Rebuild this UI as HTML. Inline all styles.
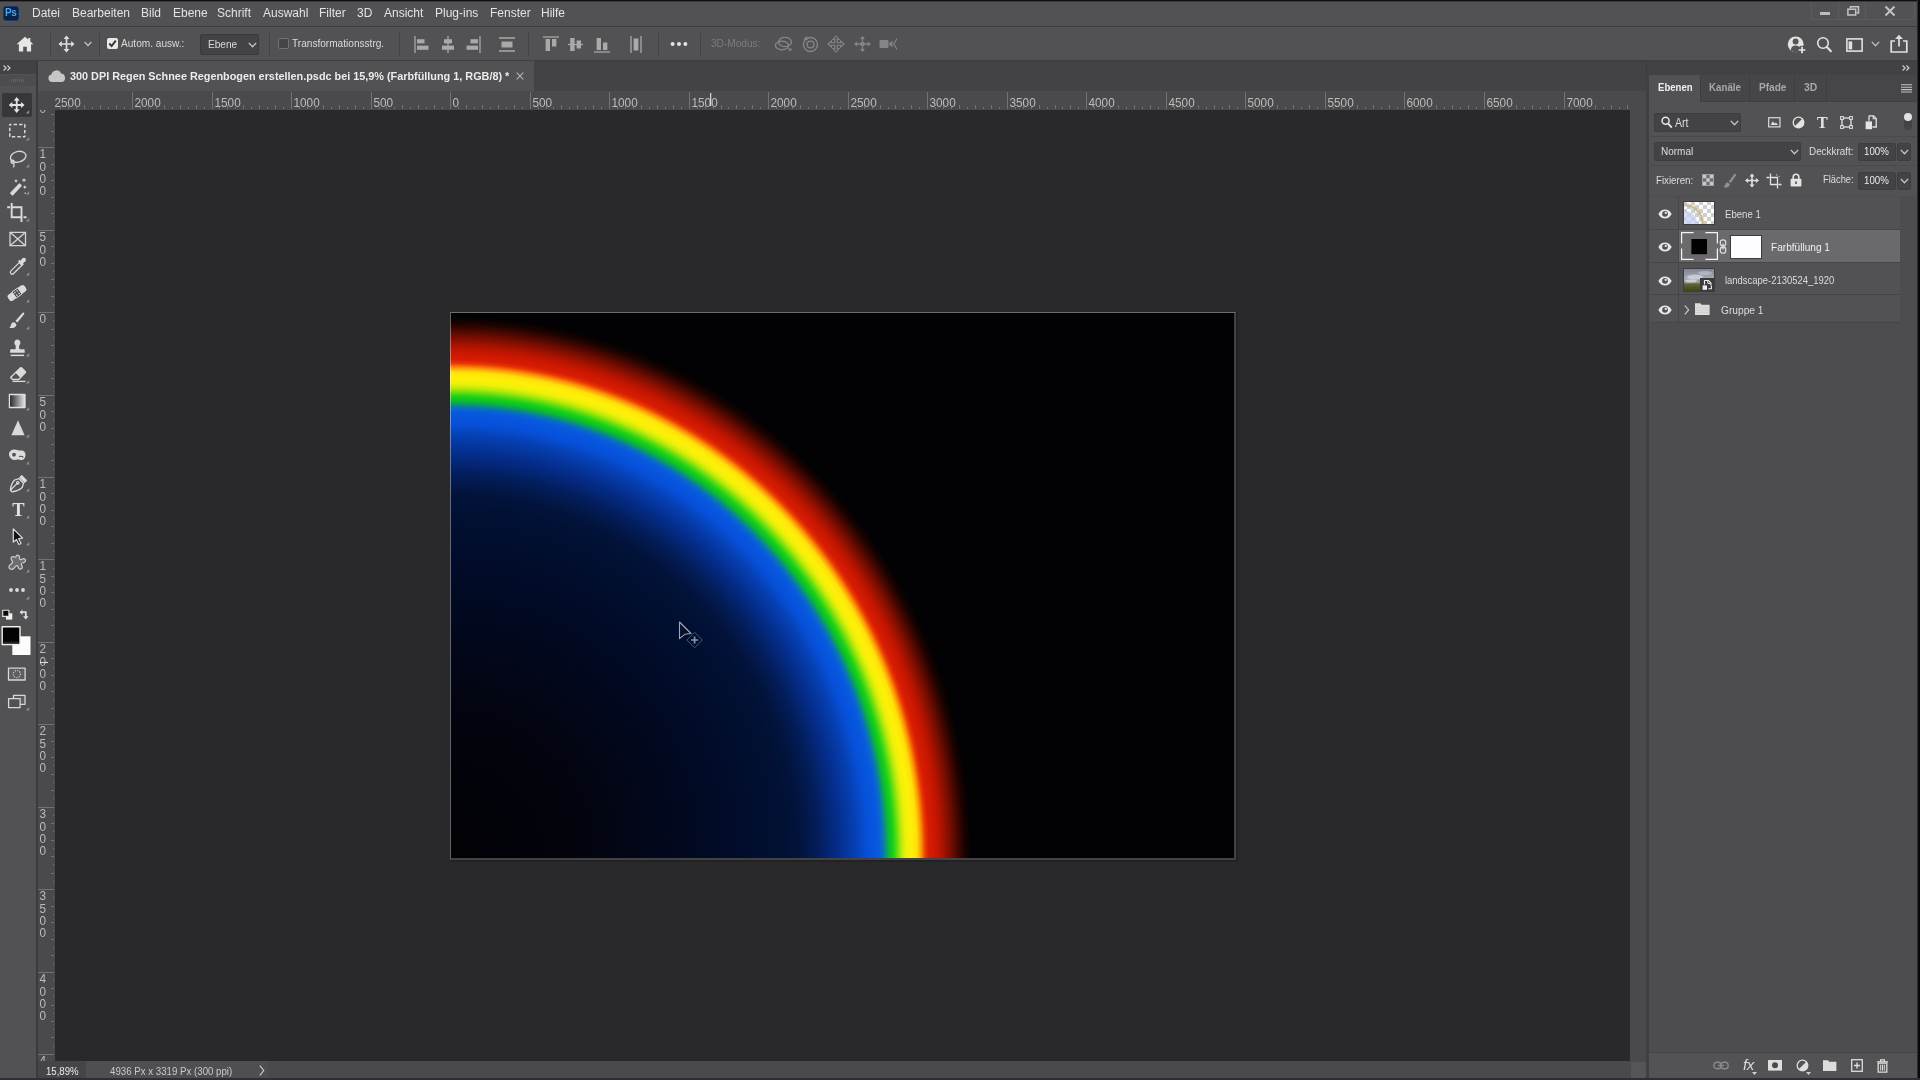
<!DOCTYPE html>
<html lang="de">
<head>
<meta charset="utf-8">
<title>300 DPI Regen Schnee Regenbogen erstellen.psdc</title>
<style>
*{box-sizing:border-box;margin:0;padding:0}
html,body{width:1920px;height:1080px;overflow:hidden;background:#4f4e50}
body{position:relative;font-family:"Liberation Sans",sans-serif;font-size:11.5px;color:#dedede;-webkit-font-smoothing:antialiased}
.abs{position:absolute}
svg{position:absolute;overflow:visible}
.t{position:absolute;white-space:nowrap;line-height:1;will-change:transform,opacity;opacity:.999}
svg.tx{opacity:.999;will-change:transform,opacity}
/* ---------- top chrome ---------- */
#topline{left:0;top:0;width:1920px;height:2px;background:#0e0e10;border-bottom:1px solid #3a393c}
#menubar{left:0;top:2px;width:1920px;height:24px;background:#525153}
#menuline{left:0;top:26px;width:1920px;height:1px;background:#3c3b3d}
#optbar{left:0;top:27px;width:1920px;height:34px;background:#525153}
#optline{left:0;top:60px;width:1920px;height:2px;background:#3f3e40}
#tabbar{left:0;top:62px;width:1920px;height:30px;background:#434244}
#doctab{left:38px;top:61px;width:496px;height:30px;background:#525153}
.menu{top:7px;font-size:12px;color:#e4e4e4;transform:scaleY(1.07);transform-origin:0 50%}
.opt{top:39px;font-size:10.1px;color:#dcdcdc;transform:scaleY(1.12);transform-origin:0 50%}
.sep{position:absolute;top:33px;width:1px;height:23px;background:#434244}
.ptab{top:82.5px;font-size:10.4px;font-weight:bold;color:#a9a8aa;transform:scaleY(1.1);transform-origin:0 50%}
.ptx{font-size:10px;color:#dedede;transform:scaleY(1.12);transform-origin:0 50%;margin-top:.7px}
.fld{background:#434244;border:1px solid #3d3c3e;border-radius:2px}
/* ---------- tools panel ---------- */
#toolhead{left:0;top:61px;width:36px;height:13px;background:#424143}
#tools{left:0;top:74px;width:36px;height:1006px;background:#525153}
#toolgap{left:36px;top:61px;width:2px;height:1019px;background:#3b3a3c}
#seltool{left:2px;top:93px;width:30px;height:24px;background:#373638;border-radius:2px}
/* ---------- document area ---------- */
#hruler{left:38px;top:91px;width:1592px;height:19px;background:#4a494b}
#vruler{left:38px;top:110px;width:17px;height:951px;background:#4a494b}
#work{left:55px;top:110px;width:1575px;height:951px;background:#29282a}
#statusbar{left:38px;top:1061px;width:1592px;height:19px;background:#4a494b}
#canvas{left:450px;top:312px;width:784px;height:546px;background:#020103;overflow:hidden}
#cvborder{left:450px;top:312px;width:786px;height:548px;border-right:2px solid #424144;border-bottom:2px solid #424144;border-top:1px solid rgba(255,255,255,.42);border-left:1px solid rgba(255,255,255,.38)}
#cvshadow{left:450px;top:312px;width:788px;height:550px;border-right:2px solid #222123;border-bottom:2px solid #222123}
#rainbow{left:0;top:0;width:784px;height:546px;
background:radial-gradient(500px 518.3px at 1.0px 543.1px,#020207 0.00%,#02030c 24.00%,#02071a 40.00%,#010b27 54.00%,#011033 66.00%,#02143c 69.80%,#031e5c 73.60%,#042c88 77.20%,#0640b4 81.00%,#0650d8 83.20%,#0858e0 85.40%,#0870c0 86.30%,#0a9870 87.00%,#0cc028 87.70%,#18d018 88.40%,#60dc10 89.20%,#b8ea08 90.10%,#f0f008 91.00%,#fff008 92.10%,#ffe008 93.20%,#ff9808 94.00%,#e83800 94.90%,#d81c04 95.60%,#cc1800 96.80%,#b41400 98.00%,#7c0e00 99.80%,#440700 101.40%,#1c0300 102.60%,#020103 104.00%)}
/* ---------- right dock ---------- */
#dockgap{left:1630px;top:91px;width:18px;height:989px;background:#4a494b}
#dockhead{left:1648px;top:61px;width:269px;height:14px;background:#424143}
#docktabs{left:1648px;top:75px;width:269px;height:27px;background:#464547}
#dock{left:1648px;top:102px;width:269px;height:978px;background:#525153}
#dockright{left:1917px;top:0;width:3px;height:1080px;background:#09090b;border-left:1px solid #2c2b2d}
#dockleft{left:1646px;top:75px;width:3px;height:1005px;background:#403f42}
#dockleft2{left:1646px;top:62px;width:1px;height:13px;background:#3a393b}
#gapcorner{left:1631px;top:1062px;width:15px;height:16px;background:#555457}
#dockbot{left:1649px;top:1053px;width:268px;height:25px;background:#535254}
</style>
</head>
<body>
<!-- top chrome -->
<div class="abs" id="menubar"></div>
<div class="abs" id="topline"></div>
<div class="abs" id="menuline"></div>
<div class="abs" id="optbar"></div>
<div class="abs" id="optline"></div>
<div class="abs" id="tabbar"></div>
<div class="abs" id="doctab"></div>

<!-- document area -->
<div class="abs" id="work"></div>
<div class="abs" id="hruler"></div>
<div class="abs" id="vruler"></div>
<div class="abs" id="statusbar"></div>
<div class="abs" id="cvshadow"></div>
<div class="abs" id="canvas"><div class="abs" id="rainbow"></div></div>
<div class="abs" id="cvborder"></div>

<!-- tools panel -->
<div class="abs" id="tools"></div>
<div class="abs" id="toolhead"></div>
<div class="abs" id="toolgap"></div>
<div class="abs" id="seltool"></div>
<div class="abs" style="left:0;top:75px;width:36px;height:11px;background:#4d4c4e"></div>
<div class="abs" style="left:11px;top:79px;width:14px;height:3px;background:repeating-linear-gradient(90deg,#626163 0 1px,transparent 1px 2px)"></div>

<!-- right dock -->
<div class="abs" id="dockgap"></div>
<div class="abs" id="dockhead"></div>
<div class="abs" id="docktabs"></div>
<div class="abs" id="dock"></div>
<div class="abs" id="dockleft"></div>
<div class="abs" id="dockleft2"></div>
<div class="abs" id="gapcorner"></div>
<div class="abs" id="dockright"></div>

<!-- menu bar -->
<div class="abs" style="left:3px;top:5.500px;width:16px;height:15.500px;background:#0c2340;border-radius:3px;border:1px solid #143a66"></div>
<div class="t" style="left:5.300px;top:8.300px;font-size:10px;font-weight:bold;color:#4fa3f2;letter-spacing:-0.3px">Ps</div>
<div class="t menu" style="left:32px">Datei</div>
<div class="t menu" style="left:72px">Bearbeiten</div>
<div class="t menu" style="left:141px">Bild</div>
<div class="t menu" style="left:173px">Ebene</div>
<div class="t menu" style="left:217px">Schrift</div>
<div class="t menu" style="left:263px">Auswahl</div>
<div class="t menu" style="left:319px">Filter</div>
<div class="t menu" style="left:357px">3D</div>
<div class="t menu" style="left:384px">Ansicht</div>
<div class="t menu" style="left:435px">Plug-ins</div>
<div class="t menu" style="left:490px">Fenster</div>
<div class="t menu" style="left:541px">Hilfe</div>
<!-- window controls -->
<div class="abs" style="left:1811px;top:2px;width:28px;height:18px;border:1px solid #5b5a5c;border-top:0"></div><div class="abs" style="left:1838px;top:2px;width:28px;height:18px;border:1px solid #5b5a5c;border-top:0"></div><div class="abs" style="left:1865px;top:2px;width:50px;height:18px;border:1px solid #5b5a5c;border-top:0"></div>
<div class="abs" style="left:1820px;top:12px;width:10px;height:3px;background:#bcbcbc"></div>
<svg style="left:1846px;top:5px" width="14" height="12" viewBox="1846 5 14 12"><path d="M1850.500 8.500V6.700h8v6.400h-2" fill="none" stroke="#c4c4c4" stroke-width="1.500"/><rect x="1847.900" y="9.200" width="7.800" height="5.800" fill="none" stroke="#c4c4c4" stroke-width="1.500"/></svg>
<svg style="left:1884px;top:5px" width="12" height="12" viewBox="0 0 12 12"><path d="M1.5 1.5l9 9M10.5 1.5l-9 9" stroke="#c4c4c4" stroke-width="1.9" fill="none"/></svg>

<!-- options bar -->
<svg style="left:16px;top:36px" width="18" height="16" viewBox="0 0 18 16"><path d="M9 .8L.6 8.2h2.3V15.4h4.3v-4.6h3.6v4.6h4.3V8.2h2.3L14.3 5.4V1.9h-2v1.7z" fill="#e6e6e6"/></svg>
<div class="sep" style="left:50px"></div>
<svg style="left:58px;top:35px" width="17" height="18" viewBox="0 0 17 18"><path d="M8.5 .6l3 3.4h-2.2v4.2h3.9V6l3.3 3-3.3 3V9.8H9.3V14h2.2l-3 3.4-3-3.4h2.2V9.8H3.8V12L.5 9l3.3-3v2.2h3.9V4H5.5z" fill="#dedede"/></svg>
<svg style="left:84px;top:41px" width="8" height="6" viewBox="0 0 8 6"><path d="M.7 1l3.3 3.6L7.3 1" fill="none" stroke="#c8c8c8" stroke-width="1.3"/></svg>
<div class="sep" style="left:99px"></div>
<div class="abs" style="left:107px;top:38px;width:11px;height:11px;background:#e9e9e9;border-radius:2px"></div>
<svg style="left:107px;top:38px" width="11" height="11" viewBox="0 0 11 11"><path d="M2.3 5.5l2.3 2.6 4.2-5.4" fill="none" stroke="#333" stroke-width="1.9"/></svg>
<div class="t opt" style="left:121px">Autom. ausw.:</div>
<div class="abs" style="left:200px;top:34px;width:59px;height:21px;background:#434244;border:1px solid #3a393b;border-radius:2px"></div>
<div class="t opt" style="left:208px;top:40px">Ebene</div>
<svg style="left:248px;top:42px" width="9" height="6" viewBox="0 0 9 6"><path d="M.8 .9L4.5 4.8 8.2 .9" fill="none" stroke="#c8c8c8" stroke-width="1.3"/></svg>
<div class="sep" style="left:269px"></div>
<div class="abs" style="left:278px;top:38px;width:11px;height:11px;background:#454446;border:1px solid #727173;border-radius:2px"></div>
<div class="t opt" style="left:292px">Transformationsstrg.</div>
<div class="sep" style="left:399px"></div>
<!-- align icons -->
<svg style="left:414px;top:36px" width="16" height="17" viewBox="0 0 16 17"><path d="M1 0v17" stroke="#a9a9a9" stroke-width="1.3"/><rect x="3" y="3.2" width="7.5" height="4.2" fill="#a9a9a9"/><rect x="3" y="9.6" width="11.5" height="4.2" fill="#a9a9a9"/></svg>
<svg style="left:441px;top:36px" width="14" height="17" viewBox="0 0 14 17"><path d="M7 0v17" stroke="#a9a9a9" stroke-width="1.3"/><rect x="3" y="3.2" width="8" height="4.2" fill="#a9a9a9"/><rect x="1" y="9.6" width="12" height="4.2" fill="#a9a9a9"/></svg>
<svg style="left:465px;top:36px" width="16" height="17" viewBox="0 0 16 17"><path d="M15 0v17" stroke="#a9a9a9" stroke-width="1.3"/><rect x="5.5" y="3.2" width="7.5" height="4.2" fill="#a9a9a9"/><rect x="1.5" y="9.6" width="11.5" height="4.2" fill="#a9a9a9"/></svg>
<svg style="left:499px;top:37px" width="16" height="15" viewBox="0 0 16 15"><path d="M0 1h16M0 14h16" stroke="#a9a9a9" stroke-width="1.3"/><rect x="2.5" y="4.5" width="11" height="6" fill="#a9a9a9"/></svg>
<div class="sep" style="left:528px"></div>
<svg style="left:543px;top:36px" width="16" height="16" viewBox="0 0 16 16"><path d="M0 1h16" stroke="#a9a9a9" stroke-width="1.3"/><rect x="2.6" y="3" width="4.4" height="12" fill="#a9a9a9"/><rect x="9" y="3" width="4.4" height="7.5" fill="#a9a9a9"/></svg>
<svg style="left:568px;top:36px" width="15" height="17" viewBox="0 0 15 17"><path d="M0 8.5h15" stroke="#a9a9a9" stroke-width="1.3"/><rect x="2.2" y="2" width="4.4" height="13" fill="#a9a9a9"/><rect x="8.6" y="4.5" width="4.4" height="8" fill="#a9a9a9"/></svg>
<svg style="left:594px;top:36px" width="16" height="17" viewBox="0 0 16 17"><path d="M0 16h16" stroke="#a9a9a9" stroke-width="1.3"/><rect x="2.6" y="2" width="4.4" height="12" fill="#a9a9a9"/><rect x="9" y="6.5" width="4.4" height="7.5" fill="#a9a9a9"/></svg>
<svg style="left:630px;top:36px" width="12" height="17" viewBox="0 0 12 17"><path d="M1 0v17M11 0v17" stroke="#a9a9a9" stroke-width="1.3"/><rect x="3.6" y="2.5" width="4.8" height="12" fill="#a9a9a9"/></svg>
<div class="sep" style="left:658px"></div>
<svg style="left:670px;top:41px" width="18" height="6" viewBox="0 0 18 6"><circle cx="2.6" cy="3" r="2" fill="#e2e2e2"/><circle cx="9" cy="3" r="2" fill="#e2e2e2"/><circle cx="15.4" cy="3" r="2" fill="#e2e2e2"/></svg>
<div class="sep" style="left:700px"></div>
<div class="t opt" style="left:711px;color:#7e7d7f">3D-Modus:</div>
<!-- 3D icons (dimmed) -->
<svg style="left:774px;top:36px" width="20" height="16" viewBox="0 0 20 16"><ellipse cx="11" cy="6" rx="6.5" ry="4.6" fill="none" stroke="#858486" stroke-width="1.4"/><ellipse cx="8" cy="9.5" rx="6.6" ry="4.2" fill="none" stroke="#858486" stroke-width="1.4"/><path d="M14 12l4.5 1-2.8 2.6z" fill="#858486"/></svg>
<svg style="left:802px;top:35px" width="17" height="18" viewBox="0 0 17 18"><circle cx="8.5" cy="9.5" r="7" fill="none" stroke="#858486" stroke-width="1.4"/><circle cx="8.5" cy="9.5" r="3.4" fill="none" stroke="#858486" stroke-width="1.4"/><path d="M1 4.5l4-3.4.6 4.2z" fill="#858486"/></svg>
<svg style="left:827px;top:35px" width="18" height="18" viewBox="-9 -9 18 18"><path d="M0-8L3-4.600H1.200V-1.200H4.600V-3L8 0 4.600 3V1.200H1.200V4.600H3L0 8-3 4.600H-1.200V1.200H-4.600V3L-8 0-4.600-3V-1.200H-1.200V-4.600H-3z" fill="none" stroke="#858486" stroke-width="1.100"/></svg>
<svg style="left:853px;top:35px" width="19" height="18" viewBox="0 0 19 18"><circle cx="9.5" cy="9" r="2.4" fill="#858486"/><path d="M9.500 .8l2.400 3.200H7.100zM9.500 17.200l2.400-3.200H7.100zM1 9l3.200-2.400v4.800zM18 9l-3.200-2.400v4.800z" fill="#858486"/><path d="M9.500 4v2.500M9.500 11.500V14M4 9h3M12 9h3" stroke="#858486" stroke-width="1.3"/></svg>
<svg style="left:879px;top:37px" width="19" height="14" viewBox="0 0 19 14"><rect x=".5" y="3" width="9" height="8" rx="1" fill="#858486"/><path d="M9.500 7l4-3.500v7z" fill="#858486"/><path d="M18 1.500L14.800 7l3.200 5.500" fill="none" stroke="#858486" stroke-width="1.2"/></svg>
<!-- right side -->
<svg style="left:1786px;top:34px" width="22" height="22" viewBox="1786 34 22 22"><circle cx="1795.700" cy="44.300" r="7.900" fill="#e4e4e4"/><circle cx="1795.600" cy="41.600" r="3" fill="#555456"/><path d="M1790.600 50.200c.6-3.200 2.400-4.600 5-4.600s4.400 1.400 5 4.600c-1.400 1.300-3.100 2-5 2s-3.600-.7-5-2z" fill="#555456"/><circle cx="1802" cy="50" r="4.300" fill="#525153"/><path d="M1802 46.700v6.600M1798.700 50h6.600" stroke="#e8e8e8" stroke-width="1.700"/></svg>
<svg style="left:1815px;top:35px" width="19" height="19" viewBox="1815 35 19 19"><circle cx="1823" cy="43" r="5.300" fill="none" stroke="#e2e2e2" stroke-width="1.600"/><path d="M1826.900 47l4 4.300" stroke="#e2e2e2" stroke-width="2" stroke-linecap="round"/></svg>
<svg style="left:1846px;top:38px" width="17" height="14" viewBox="0 0 17 14"><rect x=".9" y=".9" width="15.200" height="12.200" fill="none" stroke="#e0e0e0" stroke-width="1.600"/><rect x="2.600" y="3.400" width="3.600" height="8" fill="#e0e0e0"/></svg>
<svg style="left:1871px;top:41px" width="9" height="6" viewBox="0 0 9 6"><path d="M.8 .9L4.500 4.800 8.200 .9" fill="none" stroke="#bdbdbd" stroke-width="1.300"/></svg>
<svg style="left:1890px;top:34px" width="18" height="19" viewBox="0 0 18 19"><path d="M5 7H1.200v11h15.600V7H13" fill="none" stroke="#e0e0e0" stroke-width="1.700"/><path d="M9 12.500V2" stroke="#e0e0e0" stroke-width="1.700"/><path d="M5 5l4-4.200L13 5z" fill="#e0e0e0"/></svg>

<!-- document tab -->
<svg style="left:48px;top:70px" width="18" height="12" viewBox="0 0 18 12"><path d="M4 12a3.800 3.800 0 0 1-.6-7.500A5 5 0 0 1 13 3.600 4.300 4.300 0 0 1 14 12z" fill="#c6c6c6"/></svg>
<div class="t" id="doctitle" style="left:70px;top:71px;font-size:10.85px;font-weight:bold;color:#ececec;transform:scaleY(1.08);transform-origin:0 50%">300 DPI Regen Schnee Regenbogen erstellen.psdc bei 15,9% (Farbfüllung 1, RGB/8) *</div>
<svg style="left:516px;top:72px" width="8" height="8" viewBox="0 0 8 8"><path d="M.7 .7l6.600 6.600M7.300 .7L.7 7.300" stroke="#b4b4b4" stroke-width="1.100" fill="none"/></svg>
<!-- collapse chevrons -->
<svg style="left:3px;top:65px" width="8" height="6" viewBox="0 0 8 6"><path d="M.6 .5l2.600 2.500L.6 5.500M4.400 .5L7 3 4.400 5.500" fill="none" stroke="#d4d4d4" stroke-width="1.100"/></svg>
<svg style="left:1902px;top:65px" width="8" height="6" viewBox="0 0 8 6"><path d="M.6 .5l2.600 2.500L.6 5.500M4.400 .5L7 3 4.400 5.500" fill="none" stroke="#d4d4d4" stroke-width="1.100"/></svg>

<!--RULERS-START-->
<svg style="left:55px;top:91px;overflow:hidden" width="1575" height="19" viewBox="55 91 1575 19" shape-rendering="crispEdges">
<path d="M52.5 91.5V109M132.5 91.5V109M212.5 91.5V109M291.5 91.5V109M371.5 91.5V109M450.5 91.5V109M530.5 91.5V109M609.5 91.5V109M689.5 91.5V109M768.5 91.5V109M848.5 91.5V109M927.5 91.5V109M1007.5 91.5V109M1086.5 91.5V109M1166.5 91.5V109M1245.5 91.5V109M1325.5 91.5V109M1404.5 91.5V109M1484.5 91.5V109M1564.5 91.5V109M68.5 104.5V109M84.5 104.5V109M100.5 104.5V109M116.5 104.5V109M148.5 104.5V109M164.5 104.5V109M180.5 104.5V109M196.5 104.5V109M227.5 104.5V109M243.5 104.5V109M259.5 104.5V109M275.5 104.5V109M307.5 104.5V109M323.5 104.5V109M339.5 104.5V109M355.5 104.5V109M386.5 104.5V109M402.5 104.5V109M418.5 104.5V109M434.5 104.5V109M466.5 104.5V109M482.5 104.5V109M498.5 104.5V109M514.5 104.5V109M546.5 104.5V109M561.5 104.5V109M577.5 104.5V109M593.5 104.5V109M625.5 104.5V109M641.5 104.5V109M657.5 104.5V109M673.5 104.5V109M705.5 104.5V109M721.5 104.5V109M736.5 104.5V109M752.5 104.5V109M784.5 104.5V109M800.5 104.5V109M816.5 104.5V109M832.5 104.5V109M864.5 104.5V109M880.5 104.5V109M895.5 104.5V109M911.5 104.5V109M943.5 104.5V109M959.5 104.5V109M975.5 104.5V109M991.5 104.5V109M1023.5 104.5V109M1039.5 104.5V109M1055.5 104.5V109M1070.5 104.5V109M1102.5 104.5V109M1118.5 104.5V109M1134.5 104.5V109M1150.5 104.5V109M1182.5 104.5V109M1198.5 104.5V109M1214.5 104.5V109M1229.5 104.5V109M1261.5 104.5V109M1277.5 104.5V109M1293.5 104.5V109M1309.5 104.5V109M1341.5 104.5V109M1357.5 104.5V109M1373.5 104.5V109M1389.5 104.5V109M1420.5 104.5V109M1436.5 104.5V109M1452.5 104.5V109M1468.5 104.5V109M1500.5 104.5V109M1516.5 104.5V109M1532.5 104.5V109M1548.5 104.5V109M1579.5 104.5V109M1595.5 104.5V109M1611.5 104.5V109M1627.5 104.5V109M60.5 106.5V109M76.5 106.5V109M92.5 106.5V109M108.5 106.5V109M124.5 106.5V109M140.5 106.5V109M156.5 106.5V109M172.5 106.5V109M188.5 106.5V109M204.5 106.5V109M219.5 106.5V109M235.5 106.5V109M251.5 106.5V109M267.5 106.5V109M283.5 106.5V109M299.5 106.5V109M315.5 106.5V109M331.5 106.5V109M347.5 106.5V109M363.5 106.5V109M379.5 106.5V109M394.5 106.5V109M410.5 106.5V109M426.5 106.5V109M442.5 106.5V109M458.5 106.5V109M474.5 106.5V109M490.5 106.5V109M506.5 106.5V109M522.5 106.5V109M538.5 106.5V109M553.5 106.5V109M569.5 106.5V109M585.5 106.5V109M601.5 106.5V109M617.5 106.5V109M633.5 106.5V109M649.5 106.5V109M665.5 106.5V109M681.5 106.5V109M697.5 106.5V109M713.5 106.5V109M728.5 106.5V109M744.5 106.5V109M760.5 106.5V109M776.5 106.5V109M792.5 106.5V109M808.5 106.5V109M824.5 106.5V109M840.5 106.5V109M856.5 106.5V109M872.5 106.5V109M888.5 106.5V109M903.5 106.5V109M919.5 106.5V109M935.5 106.5V109M951.5 106.5V109M967.5 106.5V109M983.5 106.5V109M999.5 106.5V109M1015.5 106.5V109M1031.5 106.5V109M1047.5 106.5V109M1062.5 106.5V109M1078.5 106.5V109M1094.5 106.5V109M1110.5 106.5V109M1126.5 106.5V109M1142.5 106.5V109M1158.5 106.5V109M1174.5 106.5V109M1190.5 106.5V109M1206.5 106.5V109M1222.5 106.5V109M1237.5 106.5V109M1253.5 106.5V109M1269.5 106.5V109M1285.5 106.5V109M1301.5 106.5V109M1317.5 106.5V109M1333.5 106.5V109M1349.5 106.5V109M1365.5 106.5V109M1381.5 106.5V109M1397.5 106.5V109M1412.5 106.5V109M1428.5 106.5V109M1444.5 106.5V109M1460.5 106.5V109M1476.5 106.5V109M1492.5 106.5V109M1508.5 106.5V109M1524.5 106.5V109M1540.5 106.5V109M1556.5 106.5V109M1571.5 106.5V109M1587.5 106.5V109M1603.5 106.5V109M1619.5 106.5V109" stroke="#727174" stroke-width="1" fill="none"/>
</svg>
<svg class="tx" style="left:55px;top:91px;overflow:hidden" width="1575" height="19" viewBox="55 91 1575 19"><g font-family="Liberation Sans, sans-serif" font-size="11.8" fill="#bdbdbd">
<text transform="translate(54.5 106.7) scale(1 1.1)">2500</text>
<text transform="translate(134.5 106.7) scale(1 1.1)">2000</text>
<text transform="translate(214.5 106.7) scale(1 1.1)">1500</text>
<text transform="translate(293.5 106.7) scale(1 1.1)">1000</text>
<text transform="translate(373.5 106.7) scale(1 1.1)">500</text>
<text transform="translate(452.5 106.7) scale(1 1.1)">0</text>
<text transform="translate(532.5 106.7) scale(1 1.1)">500</text>
<text transform="translate(611.5 106.7) scale(1 1.1)">1000</text>
<text transform="translate(691.5 106.7) scale(1 1.1)">1500</text>
<text transform="translate(770.5 106.7) scale(1 1.1)">2000</text>
<text transform="translate(850.5 106.7) scale(1 1.1)">2500</text>
<text transform="translate(929.5 106.7) scale(1 1.1)">3000</text>
<text transform="translate(1009.5 106.7) scale(1 1.1)">3500</text>
<text transform="translate(1088.5 106.7) scale(1 1.1)">4000</text>
<text transform="translate(1168.5 106.7) scale(1 1.1)">4500</text>
<text transform="translate(1247.5 106.7) scale(1 1.1)">5000</text>
<text transform="translate(1327.5 106.7) scale(1 1.1)">5500</text>
<text transform="translate(1406.5 106.7) scale(1 1.1)">6000</text>
<text transform="translate(1486.5 106.7) scale(1 1.1)">6500</text>
<text transform="translate(1566.5 106.7) scale(1 1.1)">7000</text>
</g><path d="M710.7 93V106" stroke="#e8e8e8" stroke-width="1.1"/></svg>
<svg style="left:38px;top:110px;overflow:hidden" width="17" height="951" viewBox="38 110 17 951" shape-rendering="crispEdges">
<path d="M38 65.5H54M38 147.5H54M38 230.5H54M38 312.5H54M38 395.5H54M38 477.5H54M38 559.5H54M38 642.5H54M38 724.5H54M38 807.5H54M38 889.5H54M38 972.5H54M38 1054.5H54M50.5 81.5H54M50.5 98.5H54M50.5 114.5H54M50.5 131.5H54M50.5 164.5H54M50.5 180.5H54M50.5 197.5H54M50.5 213.5H54M50.5 246.5H54M50.5 263.5H54M50.5 279.5H54M50.5 296.5H54M50.5 329.5H54M50.5 345.5H54M50.5 362.5H54M50.5 378.5H54M50.5 411.5H54M50.5 428.5H54M50.5 444.5H54M50.5 460.5H54M50.5 493.5H54M50.5 510.5H54M50.5 526.5H54M50.5 543.5H54M50.5 576.5H54M50.5 592.5H54M50.5 609.5H54M50.5 625.5H54M50.5 658.5H54M50.5 675.5H54M50.5 691.5H54M50.5 708.5H54M50.5 741.5H54M50.5 757.5H54M50.5 774.5H54M50.5 790.5H54M50.5 823.5H54M50.5 840.5H54M50.5 856.5H54M50.5 873.5H54M50.5 906.5H54M50.5 922.5H54M50.5 939.5H54M50.5 955.5H54M50.5 988.5H54M50.5 1005.5H54M50.5 1021.5H54M50.5 1037.5H54M52.5 73.5H54M52.5 90.5H54M52.5 106.5H54M52.5 123.5H54M52.5 139.5H54M52.5 155.5H54M52.5 172.5H54M52.5 188.5H54M52.5 205.5H54M52.5 221.5H54M52.5 238.5H54M52.5 254.5H54M52.5 271.5H54M52.5 287.5H54M52.5 304.5H54M52.5 320.5H54M52.5 337.5H54M52.5 353.5H54M52.5 370.5H54M52.5 386.5H54M52.5 403.5H54M52.5 419.5H54M52.5 436.5H54M52.5 452.5H54M52.5 469.5H54M52.5 485.5H54M52.5 502.5H54M52.5 518.5H54M52.5 535.5H54M52.5 551.5H54M52.5 568.5H54M52.5 584.5H54M52.5 601.5H54M52.5 617.5H54M52.5 634.5H54M52.5 650.5H54M52.5 667.5H54M52.5 683.5H54M52.5 700.5H54M52.5 716.5H54M52.5 732.5H54M52.5 749.5H54M52.5 765.5H54M52.5 782.5H54M52.5 798.5H54M52.5 815.5H54M52.5 831.5H54M52.5 848.5H54M52.5 864.5H54M52.5 881.5H54M52.5 897.5H54M52.5 914.5H54M52.5 930.5H54M52.5 947.5H54M52.5 963.5H54M52.5 980.5H54M52.5 996.5H54M52.5 1013.5H54M52.5 1029.5H54M52.5 1046.5H54" stroke="#727174" stroke-width="1" fill="none"/>
</svg>
<svg class="tx" style="left:38px;top:110px;overflow:hidden" width="17" height="951" viewBox="38 110 17 951"><g font-family="Liberation Sans, sans-serif" font-size="11.8" fill="#bdbdbd" text-anchor="middle">
<text transform="translate(42.700 76.4) scale(1 1.1)">1</text>
<text transform="translate(42.700 88.7) scale(1 1.1)">5</text>
<text transform="translate(42.700 100.9) scale(1 1.1)">0</text>
<text transform="translate(42.700 113.2) scale(1 1.1)">0</text>
<text transform="translate(42.700 158.4) scale(1 1.1)">1</text>
<text transform="translate(42.700 170.7) scale(1 1.1)">0</text>
<text transform="translate(42.700 182.9) scale(1 1.1)">0</text>
<text transform="translate(42.700 195.2) scale(1 1.1)">0</text>
<text transform="translate(42.700 241.4) scale(1 1.1)">5</text>
<text transform="translate(42.700 253.7) scale(1 1.1)">0</text>
<text transform="translate(42.700 265.9) scale(1 1.1)">0</text>
<text transform="translate(42.700 323.4) scale(1 1.1)">0</text>
<text transform="translate(42.700 406.4) scale(1 1.1)">5</text>
<text transform="translate(42.700 418.6) scale(1 1.1)">0</text>
<text transform="translate(42.700 430.9) scale(1 1.1)">0</text>
<text transform="translate(42.700 488.4) scale(1 1.1)">1</text>
<text transform="translate(42.700 500.6) scale(1 1.1)">0</text>
<text transform="translate(42.700 512.9) scale(1 1.1)">0</text>
<text transform="translate(42.700 525.1) scale(1 1.1)">0</text>
<text transform="translate(42.700 570.4) scale(1 1.1)">1</text>
<text transform="translate(42.700 582.6) scale(1 1.1)">5</text>
<text transform="translate(42.700 594.9) scale(1 1.1)">0</text>
<text transform="translate(42.700 607.1) scale(1 1.1)">0</text>
<text transform="translate(42.700 653.4) scale(1 1.1)">2</text>
<text transform="translate(42.700 665.6) scale(1 1.1)">0</text>
<text transform="translate(42.700 677.9) scale(1 1.1)">0</text>
<text transform="translate(42.700 690.1) scale(1 1.1)">0</text>
<text transform="translate(42.700 735.4) scale(1 1.1)">2</text>
<text transform="translate(42.700 747.6) scale(1 1.1)">5</text>
<text transform="translate(42.700 759.9) scale(1 1.1)">0</text>
<text transform="translate(42.700 772.1) scale(1 1.1)">0</text>
<text transform="translate(42.700 818.4) scale(1 1.1)">3</text>
<text transform="translate(42.700 830.6) scale(1 1.1)">0</text>
<text transform="translate(42.700 842.9) scale(1 1.1)">0</text>
<text transform="translate(42.700 855.1) scale(1 1.1)">0</text>
<text transform="translate(42.700 900.4) scale(1 1.1)">3</text>
<text transform="translate(42.700 912.6) scale(1 1.1)">5</text>
<text transform="translate(42.700 924.9) scale(1 1.1)">0</text>
<text transform="translate(42.700 937.1) scale(1 1.1)">0</text>
<text transform="translate(42.700 983.4) scale(1 1.1)">4</text>
<text transform="translate(42.700 995.6) scale(1 1.1)">0</text>
<text transform="translate(42.700 1007.9) scale(1 1.1)">0</text>
<text transform="translate(42.700 1020.1) scale(1 1.1)">0</text>
<text transform="translate(42.700 1065.4) scale(1 1.1)">4</text>
<text transform="translate(42.700 1077.7) scale(1 1.1)">5</text>
<text transform="translate(42.700 1089.9) scale(1 1.1)">0</text>
<text transform="translate(42.700 1102.2) scale(1 1.1)">0</text>
</g><path d="M40 662.500H48" stroke="#e0e0e0" stroke-width="1.1"/></svg>
<!--RULERS-END-->
<!--TOOLS-START-->
<!-- tools panel icons -->
<svg class="tx" style="left:0;top:90px" width="36" height="630" viewBox="0 90 36 630" fill="none" stroke-linejoin="round">
<g fill="#8e8d8f" stroke="none">
<path d="M29.2 110v3.400h-3.400zM29.200 137v3.400h-3.400zM29.200 164v3.400h-3.400zM29.200 191v3.400h-3.400zM29.200 218v3.400h-3.400zM29.200 272v3.400h-3.400zM29.200 299v3.400h-3.400zM29.200 326v3.400h-3.400zM29.200 353v3.400h-3.400zM29.200 380v3.400h-3.400zM29.200 407v3.400h-3.400zM29.200 434v3.400h-3.400zM29.200 461v3.400h-3.400zM29.200 488v3.400h-3.400zM29.200 515v3.400h-3.400zM29.200 542v3.400h-3.400zM29.200 569v3.400h-3.400zM29.200 596v3.400h-3.400zM29.200 707v3.400h-3.400z"/>
</g>
<!-- move -->
<path transform="translate(16.700 105)" d="M0-7.900L3-4.300H.9V-.9H4.300V-3L7.900 0 4.300 3V.9H.9V4.300H3L0 7.900-3 4.300H-.9V.9H-4.300V3L-7.900 0-4.300-3V-.9H-.9V-4.300H-3z" fill="#e4e4e4"/>
<!-- marquee -->
<rect x="9.800" y="124.600" width="15" height="12.200" stroke="#dadada" stroke-width="1.500" stroke-dasharray="3.400 2.100" stroke-dashoffset="1.700"/>
<!-- lasso -->
<g stroke="#d6d6d6" stroke-width="1.400"><ellipse cx="18.200" cy="156.800" rx="7.900" ry="5.300" transform="rotate(-14 18.200 156.800)"/><circle cx="12.600" cy="161.800" r="1.500"/><path d="M13.600 163c.9 1.500.6 3-.2 4.400"/></g>
<!-- magic wand -->
<g><path d="M10.600 193.200l8.800-9.300 1.900 1.800-8.800 9.300z" fill="#dcdcdc"/><path d="M10.600 193.200l8.800-9.300 1.900 1.800-8.800 9.300z" stroke="#dcdcdc" stroke-width="1.100"/><path d="M16 179.600v2.600M14.700 180.900h2.600M24 178.400v3.400M22.300 180.100h3.400M24.800 185.800v2.600M23.500 187.100h2.600M25.200 192.400v1.600" stroke="#dcdcdc" stroke-width="1.100"/></g>
<!-- crop -->
<path d="M7.200 207.200h3M11.700 203v14.200H22M11.700 207.200h9.800V222M23.500 217.200h3" stroke="#dcdcdc" stroke-width="1.900" stroke-linejoin="miter"/>
<!-- frame -->
<g stroke="#d6d6d6" stroke-width="1.300"><rect x="10" y="232.300" width="15.500" height="13.400"/><path d="M10 232.300l15.500 13.400M25.500 232.300L10 245.700"/></g>
<!-- eyedropper -->
<g><path d="M19.300 262.600l2.600 2.600-8.300 8.300c-.9.900-2 .8-2.700.1s-.8-1.800.1-2.700z" stroke="#d8d8d8" stroke-width="1.300"/><path d="M18 261.300l1.500-1.500 1 .9 1.500-2c1-1.200 2.600-1.300 3.400-.4s.8 2.300-.4 3.400l-2 1.500.9 1-1.500 1.500z" fill="#dcdcdc"/></g>
<!-- healing brush (band-aid) -->
<g transform="rotate(-36 17 293)"><rect x="6.800" y="289.300" width="20.400" height="7.400" rx="2.600" fill="#dcdcdc"/><rect x="13.500" y="289.300" width="7" height="7.400" fill="#525153"/><rect x="13.500" y="289.300" width="7" height="7.400" stroke="#dcdcdc" stroke-width=".9"/><circle cx="15.600" cy="291.400" r=".8" fill="#dcdcdc"/><circle cx="18.400" cy="291.400" r=".8" fill="#dcdcdc"/><circle cx="15.600" cy="294.600" r=".8" fill="#dcdcdc"/><circle cx="18.400" cy="294.600" r=".8" fill="#dcdcdc"/></g>
<!-- brush -->
<g fill="#dcdcdc"><path d="M24 312.800c.5.400.4 1-.1 1.800l-6.500 8-2-1.600 6.800-7.800c.6-.700 1.300-.800 1.800-.400z"/><path d="M14.300 322.200l2 1.700c.3 2-1.200 3.700-3.400 4.100-1.400.2-2.600.2-3.700-.5 1.500-.6 1.500-1.700 1.900-3.100.4-1.500 1.700-2.400 3.200-2.200z"/></g>
<!-- clone stamp -->
<g fill="#dcdcdc"><path d="M17.300 339.600a3.200 3.200 0 0 1 2.300 5.400c-.5.600-.6 1.300-.5 2.400l.2 1.800h4.400a1 1 0 0 1 1 1v2.600H10.100v-2.600a1 1 0 0 1 1-1h4.400l.2-1.800c.1-1.100 0-1.800-.5-2.400a3.200 3.200 0 0 1 2.100-5.400z"/><rect x="10.700" y="354.600" width="13.400" height="1.500"/></g>
<!-- eraser -->
<g><path d="M10.600 377.500l9.400-9.400c.6-.6 1.400-.6 2 0l3 3c.6.600.6 1.400 0 2l-6.400 6.400h-6z" stroke="#dcdcdc" stroke-width="1.300"/><path d="M15.400 372.700l4.600-4.600c.6-.6 1.400-.6 2 0l3 3c.6.600.6 1.400 0 2l-4.600 4.600z" fill="#dcdcdc"/><path d="M12.500 381.400h13" stroke="#dcdcdc" stroke-width="1.300"/></g>
<!-- gradient -->
<defs><linearGradient id="tg" x1="0" x2="1" y1="0" y2="0"><stop offset="0" stop-color="#222"/><stop offset="1" stop-color="#e8e8e8"/></linearGradient></defs>
<rect x="9.400" y="394.500" width="15.600" height="13" fill="url(#tg)" stroke="#e0e0e0" stroke-width="1.300"/>
<!-- sharpen (triangle) -->
<path d="M18 420.300l6.600 14.900H11.400z" fill="#dadada"/>
<!-- sponge -->
<path d="M9 453.500c.3-2.600 2.600-4.300 5.600-4.100 2 .1 3 .9 4.600 1.100 1.900.2 3.500-.2 4.900.9 1.400 1.100 1.700 3.200 1.200 5-.5 1.900-1.700 3.500-3.400 3.700-1.500.2-2.400-.8-3.900-.7-1.700.1-3 .9-4.700.4C10.700 459 8.700 456.300 9 453.500z" fill="#dcdcdc"/><circle cx="14" cy="454.700" r="1.900" fill="#525153"/><path d="M19 456.500c1.500-.5 3-.3 4.400.7" stroke="#525153" stroke-width="1.100"/>
<!-- pen -->
<g stroke="#dcdcdc" stroke-width="1.300"><path d="M10.400 490.200c.3-3.900 1.700-7.500 4.200-10.200l4.400-1.300 4.500 4.500-1.300 4.400c-2.700 2.500-6.300 3.900-10.200 4.200z"/><path d="M10.800 489.800l6.400-6.400"/><circle cx="17.800" cy="482.800" r="1.200"/><path d="M19.600 477.900l2.100-2.100 4.700 4.700-2.100 2.100" fill="#dcdcdc"/></g>
<!-- type tool: real text -->
<text x="18.300" y="515.600" text-anchor="middle" font-family="Liberation Serif, serif" font-weight="bold" font-size="18.500" fill="#e2e2e2">T</text>
<!-- path selection -->
<path d="M13.300 528.800l9.300 9.300-4 .4 2.400 5-2.100 1-2.400-5-3.200 2.600z" fill="#141414" stroke="#e0e0e0" stroke-width="1.200"/>
<!-- custom shape blob -->
<path d="M16.800 555.200c1.600-.5 2.700.7 2.700 2.100 0 1.200-.2 2 .7 2.300 1.400.5 2.600-1.600 4.200-.8 1.300.6 1.400 2.400.2 3.300-1.200.9-2.800.6-3.200 1.800-.4 1.200 1.500 2.500.8 4.100-.6 1.400-2.500 1.600-3.400.4-.8-1-.6-2.600-1.800-2.800-1.600-.2-2.200 2.600-4.300 3.500-1.700.7-3.700-.3-3.800-2.100-.1-2 2-2.600 3.200-3.900 1-1.100.2-2.200-.6-3.200-.9-1.100-.5-2.900 1-3.300 1.400-.4 2.300.8 3.100.6.900-.2.300-1.600 1.200-2z" fill="#6f6e70" stroke="#cfcfcf" stroke-width="1.200"/>
<!-- edit toolbar dots -->
<g fill="#dcdcdc"><circle cx="11" cy="590" r="1.900"/><circle cx="17" cy="590" r="1.900"/><circle cx="23" cy="590" r="1.900"/></g>
<!-- default colours / swap -->
<rect x="6" y="613.300" width="6.300" height="6.300" fill="#f2f2f2"/><rect x="2.700" y="610.200" width="6.200" height="6.200" fill="#0a0a0a" stroke="#e6e6e6" stroke-width="1.100"/>
<path d="M19.600 612.200l2.800-2.800v1.900h4.300v4.900h1.900l-2.800 3.200-2.800-3.200h1.900v-3.100h-2.500v1.900z" fill="#dedede"/>
<!-- colour swatches -->
<rect x="12.300" y="636.300" width="18.200" height="18.700" fill="#fdfdfd"/>
<rect x="2.200" y="626.700" width="17.800" height="17.800" fill="#040404" stroke="#f0f0f0" stroke-width="1.400"/>
<path d="M2.800 642.200h16.600" stroke="#3a3a3a" stroke-width=".8"/>
<!-- quick mask -->
<rect x="8.500" y="668.200" width="16.600" height="11.800" stroke="#d8d8d8" stroke-width="1.300" fill="#5e5d5f"/><circle cx="16.800" cy="674.100" r="3.600" stroke="#d0d0d0" stroke-width="1.100" stroke-dasharray="1.300 1.100"/>
<!-- screen mode -->
<rect x="13.500" y="695.300" width="11.500" height="9" stroke="#d8d8d8" stroke-width="1.300" fill="#5e5d5f"/><rect x="8.600" y="698.600" width="11.500" height="9" stroke="#d8d8d8" stroke-width="1.300" fill="#525153"/>
</svg>
<!--TOOLS-END-->
<!--PANEL-START-->
<!-- panel tabs -->
<div class="abs" style="left:1649px;top:75px;width:51px;height:28px;background:#525153"></div>
<div class="abs" style="left:1700px;top:76px;width:1px;height:26px;background:#3e3d3f"></div>
<div class="abs" style="left:1749px;top:76px;width:1px;height:26px;background:#3e3d3f"></div>
<div class="abs" style="left:1794px;top:76px;width:1px;height:26px;background:#3e3d3f"></div>
<div class="abs" style="left:1826px;top:76px;width:1px;height:26px;background:#3e3d3f"></div>
<div class="abs" style="left:1700px;top:101px;width:217px;height:1px;background:#403f41"></div>
<div class="t ptab" style="left:1658px;color:#f0f0f0;font-size:9.6px">Ebenen</div>
<div class="t ptab" style="left:1709px;font-size:9.75px">Kanäle</div>
<div class="t ptab" style="left:1759px;font-size:10.1px">Pfade</div>
<div class="t ptab" style="left:1804px">3D</div>
<svg style="left:1901px;top:84px" width="11" height="9" viewBox="0 0 11 9"><path d="M0 .8h11M0 3.200h11M0 5.600h11M0 8h11" stroke="#c4c4c4" stroke-width="1.100"/></svg>
<!-- filter row -->
<div class="abs fld" style="left:1654px;top:113px;width:87px;height:19px"></div>
<svg style="left:1661px;top:116px" width="12" height="13" viewBox="0 0 12 13"><circle cx="4.600" cy="4.800" r="3.500" fill="none" stroke="#e6e6e6" stroke-width="1.500"/><path d="M7.200 7.600l3.600 4" stroke="#e6e6e6" stroke-width="1.900"/></svg>
<div class="t ptx" style="left:1675px;top:117px;font-size:10.6px">Art</div>
<svg style="left:1730px;top:120px" width="9" height="6" viewBox="0 0 9 6"><path d="M.8 .9L4.500 4.800 8.200 .9" fill="none" stroke="#c8c8c8" stroke-width="1.300"/></svg>
<svg style="left:1768px;top:117px" width="13" height="11.300" viewBox="0 0 15 13"><rect x=".8" y=".8" width="13" height="10.600" fill="none" stroke="#e4e4e4" stroke-width="1.300"/><path d="M3 9.200l2.600-4.200 2 2.800 1.400-1.600 2.600 3z" fill="#e4e4e4"/></svg>
<svg style="left:1792px;top:116px" width="13" height="13" viewBox="0 0 13 13"><circle cx="6.500" cy="6.500" r="5.300" fill="none" stroke="#e4e4e4" stroke-width="1.300"/><path d="M10.300 2.800A5.300 5.300 0 0 1 2.700 10.200z" fill="#e4e4e4"/></svg>
<div class="t" style="left:1817px;top:114.5px;font-family:'Liberation Serif',serif;font-weight:bold;font-size:16px;color:#e6e6e6">T</div>
<svg style="left:1840px;top:116px" width="13" height="13" viewBox="0 0 13 13"><rect x="2" y="2" width="9" height="9" fill="none" stroke="#e4e4e4" stroke-width="1.300"/><g fill="#525153" stroke="#e4e4e4" stroke-width="1"><rect x=".6" y=".6" width="2.800" height="2.800"/><rect x="9.600" y=".6" width="2.800" height="2.800"/><rect x=".6" y="9.600" width="2.800" height="2.800"/><rect x="9.600" y="9.600" width="2.800" height="2.800"/></g></svg>
<svg style="left:1865px;top:115px" width="12" height="15" viewBox="0 0 12 15"><path d="M4 .8h4.600l2.600 2.600v8.600H7.400" fill="none" stroke="#e4e4e4" stroke-width="1.300"/><path d="M8.200 .8v3h3" fill="none" stroke="#e4e4e4" stroke-width="1.100"/><rect x=".6" y="6.400" width="6.400" height="7.800" fill="#e4e4e4"/><path d="M4 .8v5" stroke="#e4e4e4" stroke-width="1.300"/></svg>
<div class="abs" style="left:1904px;top:115px;width:8px;height:15px;border-radius:4px;background:#434244"></div>
<div class="abs" style="left:1904px;top:112.700px;width:8px;height:8px;border-radius:4px;background:#e2e2e2"></div>
<div class="abs" style="left:1650px;top:136px;width:266px;height:1px;background:#4a494b"></div>
<!-- blend row -->
<div class="abs fld" style="left:1654px;top:142px;width:147px;height:19px"></div>
<div class="t ptx" style="left:1661px;top:146.500px">Normal</div>
<svg style="left:1790px;top:149px" width="9" height="6" viewBox="0 0 9 6"><path d="M.8 .9L4.500 4.800 8.200 .9" fill="none" stroke="#c8c8c8" stroke-width="1.300"/></svg>
<div class="t ptx" style="left:1808.500px;top:146.500px;font-size:9.9px">Deckkraft:</div>
<div class="abs fld" style="left:1858px;top:143px;width:38px;height:18px"></div>
<div class="t ptx" style="left:1863.500px;top:146.500px;font-size:9.700px;color:#ececec">100%</div>
<div class="abs fld" style="left:1897px;top:143px;width:14px;height:18px"></div>
<svg style="left:1900px;top:149px" width="9" height="6" viewBox="0 0 9 6"><path d="M.8 .9L4.500 4.800 8.200 .9" fill="none" stroke="#c8c8c8" stroke-width="1.300"/></svg>
<div class="abs" style="left:1650px;top:165px;width:266px;height:1px;background:#4a494b"></div>
<!-- lock row -->
<div class="t ptx" style="left:1655.500px;top:175.500px;font-size:9.700px">Fixieren:</div>
<svg style="left:1702px;top:174px" width="12" height="12" viewBox="0 0 12 12"><rect x=".5" y=".5" width="11" height="11" fill="#6e6d6f" stroke="#a2a1a3" stroke-width="1"/><path d="M1 1h3.300v3.300H1zM7.700 1H11v3.300H7.700zM4.300 4.300h3.400v3.400H4.300zM1 7.700h3.300V11H1zM7.700 7.700H11V11H7.700z" fill="#c9c9c9"/></svg>
<svg style="left:1723px;top:173px" width="14" height="15" viewBox="0 0 14 15"><path d="M12.800 .9c.5.400.4 1-.1 1.800l-5 7.300-2-1.500 5.300-7.100c.6-.7 1.300-.9 1.800-.5zM4.800 9.400l2 1.600c.2 1.800-1.100 3.200-3 3.500-1.200.2-2.200.1-3.200-.5 1.300-.5 1.300-1.500 1.700-2.700.4-1.300 1.300-2 2.500-1.900z" fill="#908f91"/></svg>
<svg style="left:1744.500px;top:173px" width="14" height="15" viewBox="-7 -7.500 14 15"><path d="M0-7L2.600-3.900H.8V-.8H3.900V-2.600L7 0 3.900 2.600V.8H.8V3.900H2.600L0 7-2.600 3.900H-.8V.8H-3.900V2.600L-7 0-3.900-2.600V-.8H-.8V-3.900H-2.600z" fill="#e2e2e2"/></svg>
<svg style="left:1766px;top:173px" width="16" height="16" viewBox="0 0 16 16"><path d="M.5 4.500h3M4.500 .5v11h7M4.500 4.500h7v11M12.500 11.500h3" fill="none" stroke="#e2e2e2" stroke-width="1.300"/><path d="M10 1.500l1.200.8M12.500 2.800l1 1" stroke="#e2e2e2" stroke-width="1"/></svg>
<svg style="left:1790px;top:173px" width="12" height="14" viewBox="0 0 12 14"><path d="M3.200 6V4a2.800 2.800 0 0 1 5.600 0v2" fill="none" stroke="#e4e4e4" stroke-width="1.600"/><rect x=".6" y="5.800" width="10.800" height="7.800" rx=".8" fill="#e4e4e4"/><rect x="5.200" y="8.400" width="1.600" height="2.600" fill="#525153"/></svg>
<div class="t ptx" style="left:1822.500px;top:175.500px;font-size:9.350px">Fläche:</div>
<div class="abs fld" style="left:1858px;top:172px;width:38px;height:18px"></div>
<div class="t ptx" style="left:1863.500px;top:175.500px;font-size:9.700px;color:#ececec">100%</div>
<div class="abs fld" style="left:1897px;top:172px;width:14px;height:18px"></div>
<svg style="left:1900px;top:178px" width="9" height="6" viewBox="0 0 9 6"><path d="M.8 .9L4.500 4.800 8.200 .9" fill="none" stroke="#c8c8c8" stroke-width="1.300"/></svg>
<!-- layer list -->
<div class="abs" style="left:1649px;top:196px;width:268px;height:857px;background:#4d4c4e"></div><div class="abs" id="dockbot"></div>
<div class="abs" style="left:1650px;top:197px;width:250px;height:126px;background:#525153"></div>
<div class="abs" style="left:1678px;top:230px;width:222px;height:32px;background:#6a696b"></div>
<div class="abs" style="left:1650px;top:229px;width:250px;height:1px;background:#464547"></div>
<div class="abs" style="left:1650px;top:262px;width:250px;height:1px;background:#464547"></div>
<div class="abs" style="left:1650px;top:294px;width:250px;height:1px;background:#464547"></div>
<div class="abs" style="left:1650px;top:322px;width:250px;height:1px;background:#464547"></div>
<div class="abs" style="left:1678px;top:197px;width:1px;height:125px;background:#464547"></div>
<!-- eyes -->
<svg style="left:1657.500px;top:209px" width="14" height="10" viewBox="0 0 14 10"><path d="M.3 5C2 1.900 4.300 .5 7 .5s5 1.400 6.700 4.500C12 8.100 9.700 9.500 7 9.500S2 8.100 .3 5z" fill="#e8e8e8"/><circle cx="7" cy="4.800" r="2.900" fill="#525153"/><circle cx="7.700" cy="3.900" r="1.100" fill="#e8e8e8"/></svg>
<svg style="left:1657.500px;top:242px" width="14" height="10" viewBox="0 0 14 10"><path d="M.3 5C2 1.900 4.300 .5 7 .5s5 1.400 6.700 4.500C12 8.100 9.700 9.500 7 9.500S2 8.100 .3 5z" fill="#e8e8e8"/><circle cx="7" cy="4.800" r="2.900" fill="#525153"/><circle cx="7.700" cy="3.900" r="1.100" fill="#e8e8e8"/></svg>
<svg style="left:1657.500px;top:275.500px" width="14" height="10" viewBox="0 0 14 10"><path d="M.3 5C2 1.900 4.300 .5 7 .5s5 1.400 6.700 4.500C12 8.100 9.700 9.500 7 9.500S2 8.100 .3 5z" fill="#e8e8e8"/><circle cx="7" cy="4.800" r="2.900" fill="#525153"/><circle cx="7.700" cy="3.900" r="1.100" fill="#e8e8e8"/></svg>
<svg style="left:1657.500px;top:305px" width="14" height="10" viewBox="0 0 14 10"><path d="M.3 5C2 1.900 4.300 .5 7 .5s5 1.400 6.700 4.500C12 8.100 9.700 9.500 7 9.500S2 8.100 .3 5z" fill="#e8e8e8"/><circle cx="7" cy="4.800" r="2.900" fill="#525153"/><circle cx="7.700" cy="3.900" r="1.100" fill="#e8e8e8"/></svg>
<!-- row 1: Ebene 1 -->
<svg style="left:1683px;top:201px" width="32" height="24" viewBox="0 0 32 24"><defs><pattern id="chk" width="8" height="8" patternUnits="userSpaceOnUse"><rect width="8" height="8" fill="#fdfdfd"/><rect width="4" height="4" fill="#cfcfcf"/><rect x="4" y="4" width="4" height="4" fill="#cfcfcf"/></pattern><clipPath id="tc"><rect x="1" y="1" width="30" height="22"/></clipPath></defs><rect width="32" height="24" fill="#3c3b3d"/><rect x="1" y="1" width="30" height="22" fill="url(#chk)"/><g clip-path="url(#tc)"><circle cx="1" cy="22.500" r="13" fill="#c5cff0" opacity=".7"/><circle cx="1" cy="22.500" r="18" fill="none" stroke="#8aa0e8" stroke-width="2.500" opacity=".35"/><circle cx="1" cy="22.500" r="18.600" fill="none" stroke="#c9c070" stroke-width="1.600" opacity=".9"/><circle cx="1" cy="22.500" r="20" fill="none" stroke="#e0b090" stroke-width="1.200" opacity=".5"/></g></svg>
<div class="t ptx" style="left:1724.500px;top:209px;font-size:9.600px">Ebene 1</div>
<!-- row 2: Farbfüllung 1 -->
<svg style="left:1681px;top:232px" width="37" height="28" viewBox="0 0 37 28"><path d="M.6 11.500V.6h12M24.400 .6h12v10.900M36.400 16.500v10.900h-12M12.600 27.400H.6V16.500" fill="none" stroke="#f4f4f4" stroke-width="1.200"/><rect x="10.400" y="7" width="15.600" height="15.200" fill="#020202"/></svg>
<svg style="left:1718.500px;top:239px" width="8" height="15" viewBox="0 0 8 15"><rect x="1.300" y=".8" width="5.400" height="6.200" rx="2.500" fill="none" stroke="#dcdcdc" stroke-width="1.300"/><rect x="1.300" y="8" width="5.400" height="6.200" rx="2.500" fill="none" stroke="#dcdcdc" stroke-width="1.300"/><path d="M4 4.500v6" stroke="#dcdcdc" stroke-width="1.400"/></svg>
<div class="abs" style="left:1730px;top:234.500px;width:32px;height:24px;background:#fdfdff;border:1px solid #3c3b3d"></div>
<div class="t ptx" style="left:1771px;top:242px;font-size:10.100px;color:#f2f2f2">Farbfüllung 1</div>
<!-- row 3: landscape -->
<svg style="left:1683px;top:268px" width="32" height="24" viewBox="0 0 32 24"><defs><linearGradient id="sky" x1="0" y1="0" x2="0" y2="1"><stop offset="0" stop-color="#7d8598"/><stop offset=".45" stop-color="#a8adb6"/><stop offset=".62" stop-color="#8d9488"/><stop offset=".68" stop-color="#5d6636"/><stop offset="1" stop-color="#3c4516"/></linearGradient></defs><rect width="32" height="24" fill="#3c3b3d"/><rect x="1" y="1" width="30" height="22" fill="url(#sky)"/><ellipse cx="12" cy="9" rx="8" ry="2.600" fill="#d6d9dc" opacity=".75"/><ellipse cx="22" cy="5" rx="7" ry="2" fill="#c4c8d0" opacity=".6"/><ellipse cx="8" cy="13" rx="6" ry="1.600" fill="#dfe1e0" opacity=".7"/><rect x="17" y="10" width="14" height="13" fill="#3a393b"/><path d="M21.500 12.500h4l2.400 2.400v2.600" fill="none" stroke="#f0f0f0" stroke-width="1.200"/><path d="M21.500 12.200v4.300" stroke="#f0f0f0" stroke-width="1.200"/><path d="M24.800 12.600v2.800h2.800" fill="none" stroke="#f0f0f0" stroke-width="1"/><rect x="19.600" y="17.400" width="4.400" height="4.400" fill="#f0f0f0"/><path d="M25.400 20.800h3v-3" fill="none" stroke="#f0f0f0" stroke-width="1.100"/></svg>
<div class="t ptx" style="left:1724.500px;top:275.500px;font-size:9.450px">landscape-2130524_1920</div>
<!-- row 4: Gruppe 1 -->
<svg style="left:1684px;top:305px" width="6" height="10" viewBox="0 0 6 10"><path d="M.8 .6l3.900 4.300L.8 9.400" fill="none" stroke="#d0d0d0" stroke-width="1.100"/></svg>
<svg style="left:1695px;top:303px" width="15" height="12" viewBox="0 0 15 12"><path d="M0 .3h5.300l1.200 1.500H14.600V12H0z" fill="#dcdcdc"/><path d="M0 4.600h14.600M0 7h14.600M0 9.400h14.600" stroke="#c2c2c2" stroke-width=".5"/></svg>
<div class="t ptx" style="left:1721px;top:305px;font-size:10.200px">Gruppe 1</div>
<!-- bottom icon bar -->
<div class="abs" style="left:1649px;top:1052px;width:268px;height:1px;background:#434245"></div>
<svg style="left:1713px;top:1061px" width="16" height="9" viewBox="0 0 16 9"><rect x=".8" y="1.300" width="7.400" height="6.400" rx="3.200" fill="none" stroke="#8a898b" stroke-width="1.400"/><rect x="7.800" y="1.300" width="7.400" height="6.400" rx="3.200" fill="none" stroke="#8a898b" stroke-width="1.400"/><path d="M5 4.500h6" stroke="#8a898b" stroke-width="1.400"/></svg>
<div class="t" style="left:1742.500px;top:1057px;font-style:italic;font-size:15px;color:#dedede;letter-spacing:-.5px">fx</div>
<svg style="left:1752.300px;top:1071.500px" width="5" height="3" viewBox="0 0 5 3"><path d="M0 0h5L2.500 3z" fill="#d0d0d0"/></svg>
<svg style="left:1768px;top:1060px" width="14" height="11" viewBox="0 0 14 11"><rect width="14" height="10.600" fill="#dedede"/><circle cx="7" cy="5.300" r="3" fill="#4a494b"/></svg>
<svg style="left:1796px;top:1059px" width="13" height="13" viewBox="0 0 13 13"><circle cx="6.500" cy="6.500" r="5.300" fill="none" stroke="#dedede" stroke-width="1.300"/><path d="M10.300 2.800A5.300 5.300 0 0 1 2.700 10.200z" fill="#dedede"/></svg>
<svg style="left:1806.300px;top:1071.500px" width="5" height="3" viewBox="0 0 5 3"><path d="M0 0h5L2.500 3z" fill="#d0d0d0"/></svg>
<svg style="left:1822.500px;top:1059.500px" width="14" height="11" viewBox="0 0 14 11"><path d="M0 .3h5l1.200 1.500H13.400V11H0z" fill="#dcdcdc"/></svg>
<svg style="left:1850.500px;top:1059px" width="12" height="13" viewBox="0 0 12 13"><rect x=".7" y=".7" width="10.600" height="11.600" fill="none" stroke="#dedede" stroke-width="1.300"/><path d="M6 3.500v6M3 6.500h6" stroke="#dedede" stroke-width="1.400"/></svg>
<svg style="left:1877px;top:1058.500px" width="11" height="14" viewBox="0 0 11 14"><path d="M0 2.800h11M3.600 2.600V.8h3.800v1.800" fill="none" stroke="#dedede" stroke-width="1.300"/><path d="M1.200 4.200h8.600v9H1.200z" fill="none" stroke="#dedede" stroke-width="1.300"/><path d="M3.700 5.600v6M5.500 5.600v6M7.300 5.600v6" stroke="#dedede" stroke-width="1"/></svg>
<!--PANEL-END-->
<!--STATUS-START-->
<!-- status bar -->
<div class="abs" style="left:38px;top:1061px;width:48px;height:17px;background:#454446"></div>
<div class="abs" style="left:86px;top:1061px;width:182px;height:17px;background:#4f4e50"></div>
<div class="abs" style="left:0;top:1078px;width:1920px;height:2px;background:#2e2e34"></div>
<div class="t ptx" style="left:45.500px;top:1066px;font-size:9.600px;color:#ececec">15,89%</div>
<div class="t ptx" style="left:110px;top:1066px;font-size:9.700px;color:#cacaca">4936 Px x 3319 Px (300 ppi)</div>
<svg style="left:259px;top:1065px" width="6" height="11" viewBox="0 0 6 11"><path d="M.8 .6l4 4.900-4 4.900" fill="none" stroke="#cfcfcf" stroke-width="1.100"/></svg>
<!-- cursor -->
<svg style="left:670px;top:615px" width="40" height="40" viewBox="670 615 40 40"><path d="M679.500 622V638.700L684.800 634.300 691 633.500z" fill="#081026" stroke="#a2a8bc" stroke-width="1.100" stroke-linejoin="round"/><path d="M694.600 632.200L702.400 640 694.600 647.800 686.800 640z" fill="none" stroke="#4e5572" stroke-width="1"/><path d="M694.600 636.400V643.600M691 640H698.200" stroke="#8d93ab" stroke-width="1.700"/></svg>
<!--STATUS-END-->
</body>
</html>
